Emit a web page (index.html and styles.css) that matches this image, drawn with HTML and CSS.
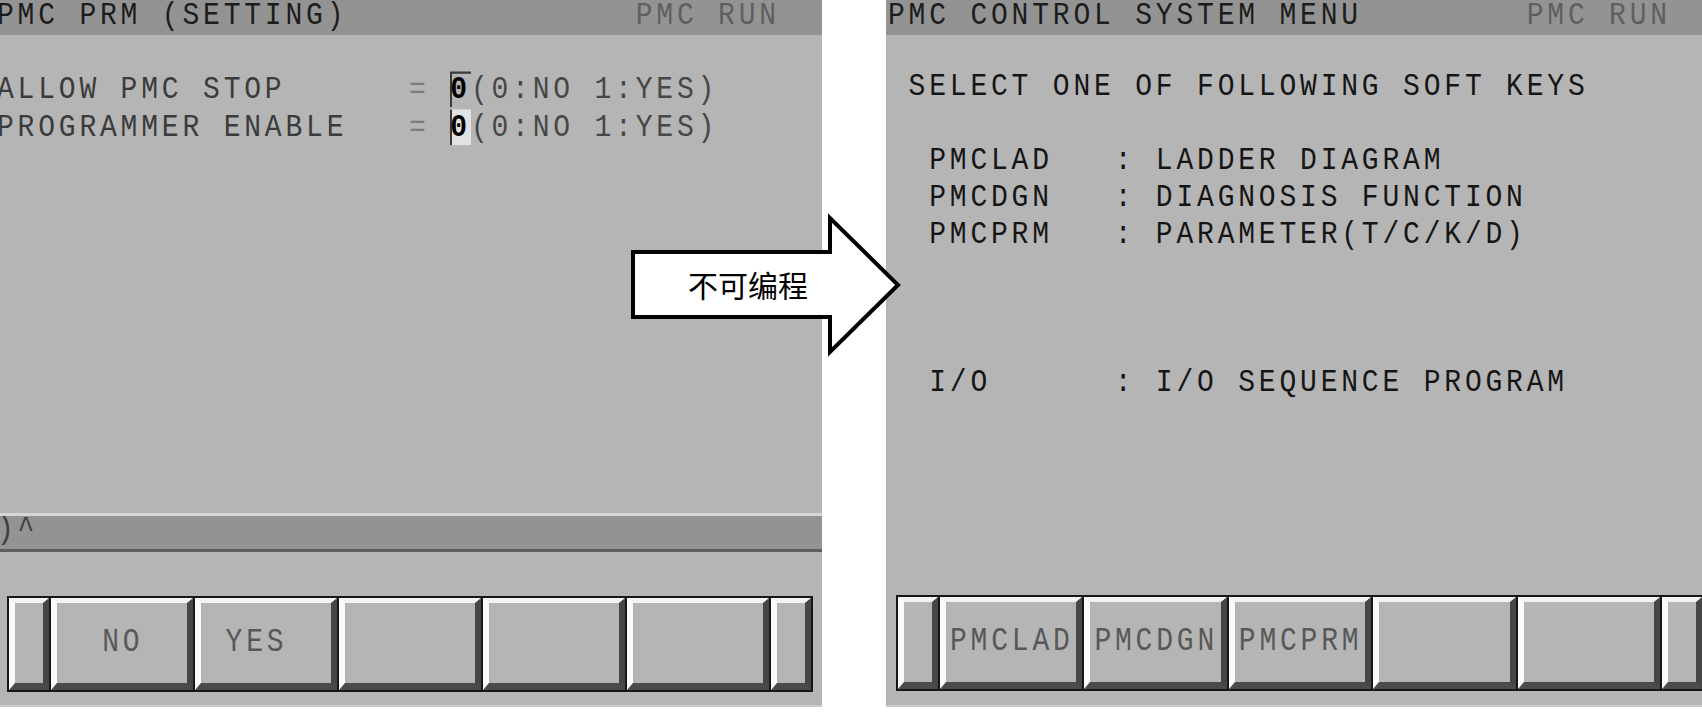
FILE: index.html
```html
<!DOCTYPE html>
<html lang="zh-CN">
<head>
<meta charset="utf-8">
<title>PMC screens</title>
<link rel="stylesheet" href="styles.css">
</head>
<body>
<div class="page">
  <section class="panel panel-left">
    <header class="titlebar"><span class="txt">PMC PRM (SETTING)              <span class="run">PMC RUN</span></span></header>
    <div class="screen screen-left dim">
      <div class="row row-left"><span class="txt">ALLOW PMC STOP      <span class="eq">=</span> <span class="cursor c1">0</span><span class="opt">(0:NO 1:YES)</span></span></div>
      <div class="row row-left"><span class="txt">PROGRAMMER ENABLE   <span class="eq">=</span> <span class="cursor c2">0</span><span class="opt">(0:NO 1:YES)</span></span></div>
    </div>
    <div class="band"><span class="txt">)^</span></div>
    <div class="softkeys">
      <div class="keys">
        <div class="key small"></div>
        <div class="key"><span class="klabel">  NO</span></div>
        <div class="key"><span class="klabel"> YES</span></div>
        <div class="key"></div>
        <div class="key"></div>
        <div class="key"></div>
        <div class="key small"></div>
      </div>
    </div>
  </section>

  <section class="panel panel-right">
    <header class="titlebar"><span class="txt">PMC CONTROL SYSTEM MENU        <span class="run">PMC RUN</span></span></header>
    <div class="screen dark">
      <div class="row"><span class="txt"> SELECT ONE OF FOLLOWING SOFT KEYS</span></div>
      <div class="row"></div>
      <div class="row"><span class="txt">  PMCLAD   : LADDER DIAGRAM</span></div>
      <div class="row"><span class="txt">  PMCDGN   : DIAGNOSIS FUNCTION</span></div>
      <div class="row"><span class="txt">  PMCPRM   : PARAMETER(T/C/K/D)</span></div>
      <div class="row"></div>
      <div class="row"></div>
      <div class="row"></div>
      <div class="row"><span class="txt">  I/O      : I/O SEQUENCE PROGRAM</span></div>
    </div>
    <div class="softkeys softkeys-right">
      <div class="keys">
        <div class="key small"></div>
        <div class="key"><span class="klabel">PMCLAD</span></div>
        <div class="key"><span class="klabel">PMCDGN</span></div>
        <div class="key"><span class="klabel">PMCPRM</span></div>
        <div class="key"></div>
        <div class="key"></div>
        <div class="key small"></div>
      </div>
    </div>
  </section>

  <div class="arrow">
    <svg class="arrow-shape" width="276" height="146" viewBox="0 0 276 146">
      <polygon points="5,40 202,40 202,6 270,73 202,140 202,105 5,105" fill="#ffffff" stroke="#000000" stroke-width="4" stroke-linejoin="miter"/>
    </svg>
    <div class="arrow-label">不可编程</div>
  </div>
</div>
</body>
</html>
```
FILE: styles.css
```css
html, body {
  margin: 0;
  padding: 0;
  background: #ffffff;
  overflow: hidden;
}

.page {
  position: relative;
  width: 1702px;
  height: 713px;
  display: flex;
  gap: 64px;
  overflow: hidden;
}

.panel {
  flex: 0 0 827px;
  width: 827px;
  height: 707px;
  display: flex;
  flex-direction: column;
  background: #b5b5b5;
  border-bottom: 2px solid #cacaca;
  box-sizing: border-box;
  font-family: "Liberation Mono", "Courier New", monospace;
  font-size: 28px;
  letter-spacing: 3.8px;
}

.panel-left {
  margin-left: -5px;
}

.txt {
  display: inline-block;
  white-space: pre;
  transform: scaleY(1.15);
  transform-origin: 50% 55%;
}

.titlebar {
  height: 35px;
  flex: 0 0 35px;
  background: #939393;
  padding-left: 2px;
  line-height: 31px;
  color: #1c1c1c;
  overflow: hidden;
}

.titlebar .run {
  color: #5f5f5f;
}

.screen {
  flex: 1 1 auto;
  padding-top: 33px;
  padding-left: 2px;
}

.screen-left {
  padding-top: 36px;
}

.row {
  height: 37px;
  line-height: 37px;
}

.row-left {
  height: 38px;
}

.dim {
  color: #3b3b3b;
}

.dark {
  color: #151515;
}

.eq {
  color: #7c7c7c;
}

.opt {
  color: #474747;
}

.cursor {
  color: #000000;
  font-weight: bold;
  box-shadow: inset 2px 0 0 #3a3a3a;
}

.c1 {
  box-shadow: inset 2px 2px 0 #3a3a3a;
}

.c2 {
  background: #e2e2e2;
}

.band {
  flex: 0 0 39px;
  height: 39px;
  box-sizing: border-box;
  border-top: 3px solid #d6d6d6;
  border-bottom: 3px solid #5e5e5e;
  background: #939393;
  padding-left: 2px;
  line-height: 28px;
  color: #3e3e3e;
  overflow: hidden;
}

.softkeys {
  flex: 0 0 auto;
  padding: 44px 9px 13px 12px;
}

.softkeys-right {
  padding-left: 10px;
  padding-top: 43px;
  padding-bottom: 14px;
}

.keys {
  display: flex;
  height: 96px;
  box-sizing: border-box;
  border: 2px solid #161616;
  background: #161616;
  gap: 2px;
}

.key {
  flex: 1 1 0;
  box-sizing: border-box;
  border-style: solid;
  border-width: 5px 6px 7px 6px;
  border-color: #f3f3f3 #464646 #4b4b4b #fbfbfb;
  background: #b5b5b5;
  display: flex;
  align-items: center;
  padding-left: 4px;
  padding-bottom: 4px;
}

.key.small {
  flex: 0 0 40px;
}

.klabel {
  color: #585858;
  white-space: pre;
  display: inline-block;
  transform: scaleY(1.2);
}

.arrow {
  position: absolute;
  left: 628px;
  top: 212px;
  width: 276px;
  height: 146px;
}

.arrow-shape {
  display: block;
}

.arrow-label {
  position: absolute;
  left: 60px;
  top: 40px;
  height: 65px;
  line-height: 65px;
  font-family: "Noto Sans CJK SC", sans-serif;
  font-size: 30px;
  color: #000000;
  white-space: nowrap;
}
```
